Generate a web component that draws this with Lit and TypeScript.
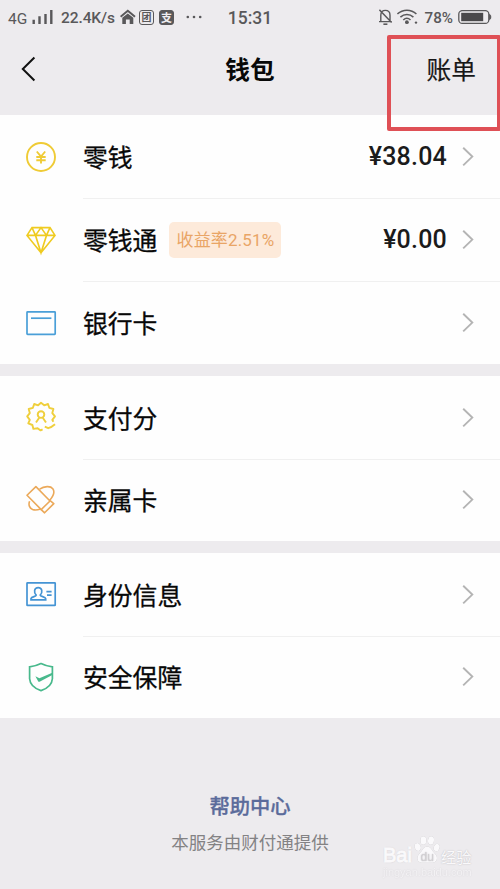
import { LitElement, html, css, svg, nothing, TemplateResult } from "lit";
import { customElement, property } from "lit/decorators.js";

const icons: Record<string, TemplateResult> = {
  coin: svg`<g stroke="#efcb35" stroke-width="1.9"><circle cx="16" cy="16" r="14"/><path d="M11.8 10.5 16 15.5 20.2 10.5M16 15.5V22.4M11.3 16H20.7M11.3 19.2H20.7"/></g>`,
  gem: svg`<g stroke="#efcb20" stroke-width="1.6"><path d="M7 3.6H25L30 11.4 16 28.8 2 11.4ZM2 11.4H30M7 3.6 10.5 11.4 16 28.8 21.5 11.4 25 3.6M10.5 11.4 16 3.6 21.5 11.4"/></g>`,
  card: svg`<g stroke="#4a9fd8" stroke-width="1.7"><rect x="2" y="4.8" width="28.2" height="22.6" rx=".6"/><path d="M6 11.2H26.4"/></g>`,
  score: svg`<g stroke="#efcf3c" stroke-width="1.9" stroke-linejoin="round"><path d="M17.6 28.4 15.6 29.4 12.6 27.2 8.4 27.9 7.4 24 3.3 22.4 4.8 18.8 2.2 15.4 4.8 12.1 3.7 8 7.9 6.8 9.2 3 13.1 4.3 16 1.8 19.2 4.3 23 3 24.3 6.8 28.4 8 27.3 12.1 30 15.4 27.3 18.8 28.4 20.8M30 23.2C27.5 25.4 26 26.4 23.2 27.2L19.8 25.6"/><circle cx="16" cy="13.6" r="3.3"/><path d="M11 21.5 14.2 16.8M17.8 16.8 21 21.5"/></g>`,
  family: svg`<g stroke="#eba95a" stroke-width="1.6" stroke-linejoin="round"><path d="M10.9 2.6 25 17 16.2 25.6 2 11.3Z"/><path d="M14.6 5.2C19.2 2 25.6 1.7 27.8 4.7C30.1 8 28 12.6 24.6 16.4M4.6 17.2C3.2 20.6 4.4 24.2 7.6 25.5C10 26.4 12.6 26 15.6 25M16.2 25.6 19.6 28.8 28.8 19.6 25.4 16.8"/></g>`,
  identity: svg`<g stroke="#4594d4" stroke-width="1.7"><rect x="2" y="4.8" width="28.2" height="22.6" rx=".5"/><path d="M6 21.8V20.6C6.6 18.5 11 18.8 11.2 17.2C8.6 14.7 9 9.6 13.2 9.6C17.4 9.6 17.8 14.7 15.2 17.2C15.4 18.8 20.4 18.5 20.7 20.6V21.8ZM21.4 13.6H26.6M22 17.1H26.6"/></g>`,
  shield: svg`<g stroke="#48b98c" stroke-width="1.7"><path d="M16 2.6C19.4 4.4 23 5.4 27.4 5.8V17.8C27 23.4 22.4 27.6 16 29.6C9.6 27.6 5 23.4 4.6 17.8V5.8C9 5.4 12.6 4.4 16 2.6Z"/><path fill="#48b98c" stroke="none" d="M10.4 15.2 14.4 17.2 27.3 11.8V13.9L14.6 20.8H13.4Z"/></g>`,
};

@customElement("wallet-row")
class WalletRow extends LitElement {
  static styles = css`
    :host { display: flex; height: 83px; background: #fefefe; align-items: stretch; }
    .lead { width: 83px; box-sizing: border-box; padding-left: 25px; display: flex; align-items: center; flex: none; }
    svg { display: block; fill: none; flex: none; }
    .main { flex: 1; display: flex; align-items: center; padding-right: 26px; border-top: 1px solid transparent; }
    .main.ruled { border-top-color: #f0f0f0; }
    .label { font-size: 24.8px; line-height: 34px; color: #080808; -webkit-text-stroke: .3px #080808; padding-bottom: 2px; white-space: nowrap; }
    .tag { margin-left: 12px; width: 112px; height: 36px; box-sizing: border-box; border-radius: 5px; background: #fdeada; color: #e9a566; font: 17px/37px Roboto, "Noto Sans CJK SC", sans-serif; letter-spacing: .15px; text-align: center; white-space: nowrap; }
    .amount { margin-left: auto; font: 500 25px/34px Roboto, sans-serif; letter-spacing: .2px; color: #1b1b1b; margin-right: 15px; }
    .arrow { margin-left: auto; }
    .amount + .arrow { margin-left: 0; }
  `;
  @property() icon = "";
  @property() label = "";
  @property() tag = "";
  @property() amount = "";
  @property({ type: Boolean }) ruled = false;

  render() {
    return html`
      <div class="lead"><svg width="32" height="32" viewBox="0 0 32 32">${icons[this.icon]}</svg></div>
      <div class="main ${this.ruled ? "ruled" : ""}">
        <span class="label">${this.label}</span>
        ${this.tag ? html`<span class="tag">${this.tag}</span>` : nothing}
        ${this.amount ? html`<span class="amount">${this.amount}</span>` : nothing}
        <svg class="arrow" width="12" height="20" viewBox="0 0 12 20" stroke="#b4b4b4" stroke-width="1.9"><path d="M1.2 .8 10.3 9.6 1.2 18.4"/></svg>
      </div>`;
  }
}

@customElement("status-bar")
class StatusBar extends LitElement {
  static styles = css`
    :host { display: flex; height: 34px; align-items: center; color: #59585a; font: 500 15.5px/20px Roboto, sans-serif; padding: 0 8px; }
    svg { display: block; flex: none; fill: none; stroke: #59585a; }
    .side { display: flex; align-items: center; flex: 1; white-space: nowrap; }
    .net { font-weight: 400; font-size: 15.5px; width: 23px; padding-top: 3px; }
    .speed { width: 59px; letter-spacing: -.1px; padding-top: 1px; }
    .badge { width: 15px; height: 15px; box-sizing: border-box; border: 1.5px solid #59585a; border-radius: 3px; font: 700 10px/12px "Noto Sans CJK SC", sans-serif; display: flex; align-items: center; justify-content: center; margin-right: 5px; }
    .solid { background: #59585a; color: #f0eef1; font-size: 11px; }
    .time { font-size: 17.5px; padding-top: 1px; }
    .right { justify-content: flex-end; }
    .percent { font-size: 15.2px; margin: 0 5px 0 6px; padding-top: 1px; }
    .wifi { margin-left: 3px; }
  `;
  render() {
    return html`
      <div class="side">
        <span class="net">4G</span>
        <svg width="30" height="16" viewBox="0 0 30 16" stroke-width="2.4"><path d="M2.7 15V10.7M8.5 15V7.3M14.5 15V5M20.3 15V1"/></svg>
        <span class="speed">22.4K/s</span>
        <svg width="19" height="16" viewBox="0 0 19 16"><path fill="#59585a" stroke="none" d="M2.3 8.8 7.8 4.4 13.3 8.8V15H9.7V10.4H5.9V15H2.3Z"/><path d="M.6 7.8 7.8 1.8 15 7.8" stroke-width="2"/></svg>
        <span class="badge">团</span>
        <span class="badge solid">支</span>
        <svg width="26" height="4" viewBox="0 0 26 4"><g fill="#59585a" stroke="none"><circle cx="8.8" cy="2" r="1.3"/><circle cx="15" cy="2" r="1.3"/><circle cx="21.2" cy="2" r="1.3"/></g></svg>
      </div>
      <span class="time">15:31</span>
      <div class="side right">
        <svg width="15" height="17" viewBox="0 0 15 17" stroke-width="1.4"><path d="M0 12.6H12.8M1.8 12.4V6.2C1.8 3 3.7 1.4 6.3 1.4S11 3 11 6.2V12.4M.4 .8 12.6 13.6"/><path d="M4.4 15.2H8.4" stroke-width="1.6"/></svg>
        <svg class="wifi" width="22" height="16" viewBox="0 0 22 16" stroke-width="1.6"><path d="M.4 5C5.8 0 14 0 19.4 5M3.4 8.1C7.2 4.6 12.6 4.6 16.4 8.1M6.3 11C8.6 8.8 11.2 8.8 13.5 11"/><circle cx="9.9" cy="13.2" r="1.9" fill="#59585a" stroke="none"/><circle cx="19" cy="13.6" r="1.2" fill="#59585a" stroke="none"/></svg>
        <span class="percent">78%</span>
        <svg width="34" height="15" viewBox="0 0 34 15"><rect x=".8" y=".6" width="30" height="12.8" rx="3.5" stroke-width="1.3"/><rect x="3.2" y="2.8" width="22" height="8.4" fill="#4a494b" stroke="none"/><path d="M31.6 4.4C33.2 5 33.2 9 31.6 9.6Z" fill="#59585a"/></svg>
      </div>`;
  }
}

@customElement("app-root")
class AppRoot extends LitElement {
  static styles = css`
    :host { display: flex; flex-direction: column; position: relative; width: 500px; height: 889px; overflow: hidden; background: #edebee; font-family: "Noto Sans CJK SC", sans-serif; }
    .bar { display: grid; grid-template-columns: 1fr auto 1fr; align-items: center; height: 81px; box-sizing: border-box; padding: 0 24px 12px; }
    .bar svg { display: block; fill: none; margin-left: -3px; }
    .title { font-size: 24.7px; font-weight: 700; line-height: 34px; color: #080808; padding-bottom: 1px; }
    .bills { font-size: 24.7px; line-height: 34px; color: #171717; text-align: right; -webkit-text-stroke: .2px #171717; padding-bottom: 2px; }
    .group { display: flex; flex-direction: column; margin-bottom: 12px; background: #fefefe; }
    .group.later { height: 165px; }
    .foot { display: flex; flex-direction: column; align-items: center; padding-top: 60px; }
    .help { font-size: 20.3px; line-height: 30px; font-weight: 500; color: #5b6b9b; -webkit-text-stroke: .3px #5b6b9b; }
    .by { font-size: 17.5px; line-height: 26px; margin-top: 9px; color: #838284; }
    .frame { position: absolute; left: 387px; top: 35px; width: 114px; height: 96px; box-sizing: border-box; border: 4px solid #df5056; border-radius: 2px; }
    .mark { position: absolute; left: 383px; top: 833px; width: 110px; color: #faf9fb; text-shadow: 0 0 1.5px #b4b2b6; font-family: "Liberation Sans", sans-serif; }
    .brand { display: flex; align-items: center; height: 32px; font-size: 20px; line-height: 24px; }
    .bai { width: 31px; padding-top: 12px; -webkit-text-stroke: .9px #faf9fb; }
    .jing { font: 400 15.2px/22px "Noto Sans CJK SC", sans-serif; padding-top: 13px; white-space: nowrap; }
    .paw { display: block; filter: drop-shadow(0 0 .7px #b5b3b6); }
    .url { font-size: 11px; line-height: 12px; opacity: .5; white-space: nowrap; padding-top: 1px; }
  `;
  render() {
    return html`
      <status-bar></status-bar>
      <header class="bar">
        <svg width="15" height="26" viewBox="0 0 15 26" stroke="#111" stroke-width="2"><path d="M13.4 1.5 1.8 13 13.4 24.5"/></svg>
        <span class="title">钱包</span>
        <span class="bills">账单</span>
      </header>
      <section class="group">
        <wallet-row icon="coin" label="零钱" amount="¥38.04"></wallet-row>
        <wallet-row ruled icon="gem" label="零钱通" tag="收益率2.51%" amount="¥0.00"></wallet-row>
        <wallet-row ruled icon="card" label="银行卡"></wallet-row>
      </section>
      <section class="group later">
        <wallet-row icon="score" label="支付分"></wallet-row>
        <wallet-row ruled icon="family" label="亲属卡"></wallet-row>
      </section>
      <section class="group later">
        <wallet-row icon="identity" label="身份信息"></wallet-row>
        <wallet-row ruled icon="shield" label="安全保障"></wallet-row>
      </section>
      <footer class="foot">
        <span class="help">帮助中心</span>
        <span class="by">本服务由财付通提供</span>
      </footer>
      <div class="frame"></div>
      <div class="mark">
        <div class="brand">
          <span class="bai">Bai</span>
          <svg class="paw" width="27" height="30" viewBox="0 0 27 30"><g fill="#faf9fb"><ellipse cx="3.7" cy="13" rx="3" ry="4" transform="rotate(-18 3.7 13)"/><ellipse cx="9.4" cy="6.5" rx="3" ry="4.2"/><ellipse cx="17" cy="6.5" rx="3" ry="4.2" transform="rotate(8 17 6.5)"/><ellipse cx="22.7" cy="13.5" rx="2.9" ry="3.8" transform="rotate(20 22.7 13.5)"/><path d="M13.2 12.5C17 12.5 18 17 21 19.7C25 23.5 22.5 28.8 18.4 28.7H8C3.6 28.8 1.5 23.5 5.4 19.7C8.4 17 9.4 12.5 13.2 12.5Z"/></g><text x="13.2" y="26.5" text-anchor="middle" font-size="12" font-family="Liberation Sans, sans-serif" fill="#d2d0d3">du</text></svg>
          <span class="jing">经验</span>
        </div>
        <div class="url">jingyan.baidu.com</div>
      </div>`;
  }
}
